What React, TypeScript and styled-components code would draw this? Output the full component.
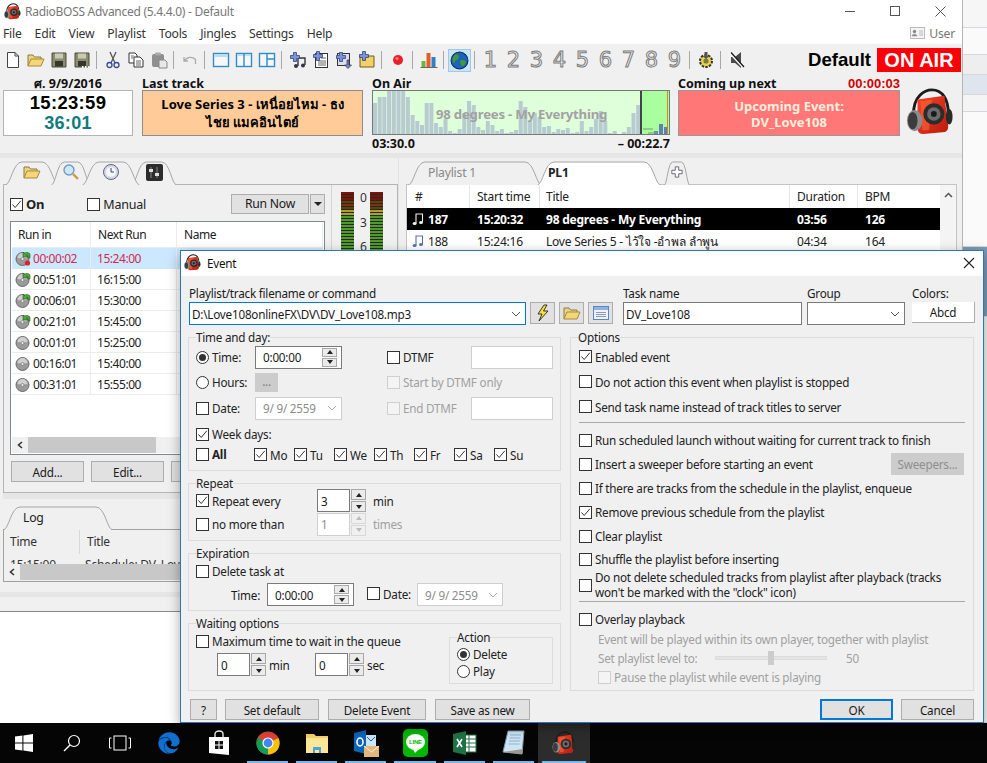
import React from 'react';
import styled, { createGlobalStyle } from 'styled-components';
import { FaEdge } from 'react-icons/fa';

const GlobalStyle = createGlobalStyle`
  html, body { margin: 0; padding: 0; background: #fff; overflow: hidden; }
  * { box-sizing: border-box; }
  body { font-family: "Noto Sans", "Open Sans", "DejaVu Sans", sans-serif; font-size: 11.7px; letter-spacing: -0.22px; color: #1a1a1a; }
  svg { display: block; flex: none; }
`;

const Page = styled.div`
  position: relative;
  width: 987px;
  height: 763px;
  overflow: hidden;
  display: flex;
  flex-direction: column;
`;

const Desktop = styled.div`
  height: 723px;
  display: flex;
  align-items: flex-start;
  background: #fff;
`;

const MainWindow = styled.div`
  width: 963px;
  height: 612px;
  background: #f0f0f0;
  display: flex;
  flex-direction: column;
  border-bottom: 1px solid #8a8a8a;
  border-right: 1px solid #b5b5b5;
`;

const BackWindow = styled.div`
  flex: 1;
  height: 723px;
  display: flex;
  flex-direction: column;
  background: #fafafa;
`;

const BackBand = styled.div<{ $h: number; $c: string }>`
  height: ${(p) => p.$h}px;
  background: ${(p) => p.$c};
  border-bottom: 1px solid #d4d8dc;
`;

const TitleBar = styled.div`
  height: 22px;
  background: #fff;
  display: flex;
  align-items: center;
  padding-left: 4px;
  gap: 4px;
  color: #777;
  font-size: 12px;
  letter-spacing: -0.28px;
`;

const WinControls = styled.div`
  margin-left: auto;
  display: flex;
  align-items: center;
  gap: 35px;
  padding-right: 16px;
`;

const MenuBar = styled.div`
  height: 22px;
  background: #fff;
  display: flex;
  align-items: center;
  padding-left: 3px;
  gap: 13px;
  font-size: 12.2px;
  color: #333;
`;

const UserBox = styled.div`
  margin-left: auto;
  display: flex;
  align-items: center;
  gap: 4px;
  padding-right: 7px;
  color: #777;
`;

const Toolbar = styled.div`
  height: 32px;
  display: flex;
  align-items: center;
  padding-left: 1px;
`;

const ToolBtn = styled.div<{ $on?: boolean }>`
  width: 23px;
  height: 23px;
  display: flex;
  align-items: center;
  justify-content: center;
  background: ${(p) => (p.$on ? '#cce4f7' : 'transparent')};
  border: 1px solid ${(p) => (p.$on ? '#99c9ef' : 'transparent')};
`;

const ToolSep = styled.div`
  width: 1px;
  height: 18px;
  background: #a8a8a8;
  margin: 0 4px 0 3px;
`;

const Digit = styled.div`
  width: 23px;
  text-align: center;
  font-family: "DejaVu Sans", sans-serif;
  font-size: 21px;
  line-height: 23px;
  letter-spacing: 0;
  color: #f0f0f0;
  -webkit-text-stroke: 1px #7c7c7c;
`;

const ProfileName = styled.div`
  margin-left: auto;
  font-family: "Liberation Sans", sans-serif;
  font-weight: 700;
  font-size: 18.6px;
  letter-spacing: 0;
  color: #000;
  margin-right: 6px;
`;

const OnAir = styled.div`
  width: 84px;
  height: 24px;
  margin-right: 1px;
  background: #fb0007;
  color: #fff;
  font-family: "Liberation Sans", sans-serif;
  font-weight: 700;
  font-size: 20px;
  letter-spacing: 0;
  line-height: 24px;
  text-align: center;
`;

const InfoStrip = styled.div`
  height: 77px;
  display: flex;
  padding-left: 3px;
`;

const InfoCol = styled.div<{ $w: number; $mr: number }>`
  width: ${(p) => p.$w}px;
  margin-right: ${(p) => p.$mr}px;
  display: flex;
  flex-direction: column;
`;

const InfoHead = styled.div<{ $center?: boolean }>`
  height: 14px;
  line-height: 15px;
  font-weight: 700;
  font-size: 12.5px;
  letter-spacing: 0;
  color: #111;
  display: flex;
  justify-content: ${(p) => (p.$center ? 'center' : 'space-between')};
`;

const RedTime = styled.span`
  color: #d00000;
  font-family: "Liberation Sans", sans-serif;
  font-size: 13px;
`;

const ClockBox = styled.div`
  height: 46px;
  background: #fff;
  border: 1px solid #b4b4b4;
  display: flex;
  flex-direction: column;
  align-items: center;
  justify-content: center;
  font-family: "Liberation Sans", sans-serif;
  font-weight: 700;
  letter-spacing: 0;
`;

const ClockMain = styled.div`
  font-size: 18.5px;
  line-height: 20px;
  color: #000;
  letter-spacing: 0.3px;
`;

const ClockSub = styled.div`
  font-size: 18px;
  line-height: 20px;
  color: #0f7c7c;
  letter-spacing: 0.3px;
`;

const LastTrack = styled.div`
  height: 46px;
  background: #ffcc99;
  border: 1px solid #8c8c8c;
  text-align: center;
  font-weight: 700;
  font-size: 13px;
  letter-spacing: 0;
  line-height: 18px;
  padding: 4px 14px 0;
  color: #000;
`;

const SpectrumBox = styled.div`
  position: relative;
  height: 46px;
  border: 1px solid #777;
  overflow: hidden;
`;

const SpectrumTitle = styled.div`
  position: absolute;
  left: 63px;
  top: 14px;
  font-weight: 700;
  font-size: 13.2px;
  line-height: 18px;
  color: #a2a2a2;
  white-space: nowrap;
`;

const TimeRow = styled.div`
  display: flex;
  justify-content: space-between;
  font-weight: 700;
  font-size: 12.5px;
  letter-spacing: 0;
  line-height: 18px;
  color: #111;
`;

const UpcomingBox = styled.div`
  height: 46px;
  background: #ff7777;
  border: 1px solid #999;
  color: #ffeedd;
  font-weight: 700;
  font-size: 13px;
  letter-spacing: 0;
  line-height: 16px;
  text-align: center;
  padding-top: 7px;
`;

const LogoCell = styled.div`
  padding: 12px 0 0 6px;
`;

const Band = styled.div<{ $h: number }>`
  height: ${(p) => p.$h}px;
  flex: none;
  background: #e6e6e6;
`;

const Content = styled.div`
  height: 434px;
  display: flex;
`;

const LeftSide = styled.div`
  width: 398px;
  display: flex;
  flex-direction: column;
  padding-left: 3px;
`;

const RightSide = styled.div`
  flex: 1;
  display: flex;
  flex-direction: column;
  padding: 0 5px 0 7px;
  border-left: 1px solid #e2e2e2;
`;

const TabRow = styled.div<{ $h: number }>`
  height: ${(p) => p.$h}px;
  display: flex;
  align-items: flex-end;
  padding-left: 2px;
  position: relative;
  z-index: 2;
  margin-bottom: -1px;
`;

const TabShell = styled.div<{ $w: number; $active?: boolean; $ml?: number; $muted?: boolean; $bold?: boolean; $pl?: number }>`
  position: relative;
  width: ${(p) => p.$w}px;
  height: 24px;
  margin-left: ${(p) => p.$ml ?? 0}px;
  z-index: ${(p) => (p.$active ? 3 : 1)};
  display: flex;
  align-items: center;
  justify-content: ${(p) => (p.$pl ? 'flex-start' : 'center')};
  padding-bottom: 2px;
  padding-left: ${(p) => p.$pl ?? 0}px;
  font-size: 12.2px;
  font-weight: ${(p) => (p.$bold ? 700 : 400)};
  color: ${(p) => (p.$muted ? '#888' : '#222')};
`;

const TabArt = styled.svg`
  position: absolute;
  left: 0;
  top: 0;
`;

const TabLabel = styled.span`
  position: relative;
  display: flex;
`;

const Tab = ({ w, active, ml, pl, fill, muted, bold, children }: { w: number; active?: boolean; ml?: number; pl?: number; fill?: string; muted?: boolean; bold?: boolean; children: React.ReactNode }) => {
  const c = Math.min(17, w / 3);
  return (
    <TabShell $w={w} $active={active} $ml={ml} $pl={pl} $muted={muted} $bold={bold}>
      <TabArt width={w} height={24} viewBox={`0 0 ${w} 24`}>
        <path
          d={`M0.5 24 C${c * 0.35} 23 ${c * 0.47} 1 ${c} 1 H${w - c} C${w - c * 0.47} 1 ${w - c * 0.35} 23 ${w - 0.5} 24`}
          fill={fill ?? '#f0f0f0'}
          stroke="#a6a6a6"
        />
      </TabArt>
      <TabLabel>{children}</TabLabel>
    </TabShell>
  );
};

const SchedFrame = styled.div`
  height: 309px;
  border: 1px solid #b4b4b4;
  display: flex;
`;

const SchedMain = styled.div`
  width: 328px;
  border-right: 1px solid #d4d4d4;
  padding: 8px 6px 0 6px;
  display: flex;
  flex-direction: column;
`;

const VuPanel = styled.div`
  flex: 1;
  display: flex;
  padding: 7px 0 0 9px;
  gap: 16px;
  position: relative;
`;

const VuScale = styled.div`
  position: absolute;
  left: 28px;
  top: 1px;
  display: flex;
  flex-direction: column;
  font-size: 12px;
  line-height: 24.5px;
  color: #333;
`;

const SchedControls = styled.div`
  height: 22px;
  display: flex;
  align-items: center;
`;

const CheckSpacer = styled.div`
  width: 43px;
`;

const RunNow = styled.div`
  margin-left: auto;
  width: 78px;
  height: 20px;
  background: #e1e1e1;
  border: 1px solid #adadad;
  text-align: center;
  line-height: 18px;
  font-size: 12.2px;
`;

const RunDrop = styled.div`
  width: 15px;
  height: 20px;
  margin-left: 1px;
  background: #e1e1e1;
  border: 1px solid #adadad;
  display: flex;
  align-items: center;
  justify-content: center;
`;

const TriDown = styled.div`
  border-left: 4px solid transparent;
  border-right: 4px solid transparent;
  border-top: 4px solid #222;
`;

const SchedList = styled.div`
  margin-top: 6px;
  height: 234px;
  background: #fff;
  border: 1px solid #828790;
  padding: 0 1px;
  display: flex;
  flex-direction: column;
  overflow: hidden;
`;

const SchedRow = styled.div<{ $head?: boolean; $sel?: boolean; $red?: boolean }>`
  height: ${(p) => (p.$head ? 26 : 21)}px;
  flex: none;
  display: grid;
  grid-template-columns: 79px 86px 1fr;
  align-items: center;
  background: ${(p) => (p.$sel ? '#cce8ff' : '#fff')};
  color: ${(p) => (p.$red ? '#d32a4c' : '#222')};
  border-bottom: 1px solid ${(p) => (p.$sel ? '#cce8ff' : '#ececec')};
  font-size: 12px;
  letter-spacing: -0.45px;
`;

const SchedCell = styled.div<{ $pl: number }>`
  display: flex;
  align-items: center;
  gap: 2px;
  height: 100%;
  padding-left: ${(p) => p.$pl}px;
  border-right: 1px solid #ececec;
`;

const ListFill = styled.div`
  flex: 1;
`;

const HScroll = styled.div`
  height: 16px;
  flex: none;
  margin-bottom: 1px;
  background: #f0f0f0;
  display: flex;
  align-items: stretch;
`;

const ScrollArrow = styled.div`
  width: 16px;
  display: flex;
  align-items: center;
  justify-content: center;
`;

const ScrollThumb = styled.div<{ $w: number }>`
  width: ${(p) => p.$w}px;
  background: #c8c8c8;
`;

const ButtonRow = styled.div`
  margin-top: 6px;
  display: flex;
  gap: 7px;
  padding-left: 1px;
`;

const PlainBtn = styled.div<{ $w: number; $h?: number; $ml?: number; $primary?: boolean; $off?: boolean }>`
  width: ${(p) => p.$w}px;
  height: ${(p) => p.$h ?? 21}px;
  margin-left: ${(p) => p.$ml ?? 0}px;
  flex: none;
  background: ${(p) => (p.$off ? '#cccccc' : '#e1e1e1')};
  border: ${(p) => (p.$primary ? '2px solid #0078d7' : p.$off ? '1px solid #cccccc' : '1px solid #adadad')};
  color: ${(p) => (p.$off ? '#8f8f8f' : '#1a1a1a')};
  display: flex;
  align-items: center;
  justify-content: center;
`;

const LogTabs = styled.div`
  height: 31px;
  display: flex;
  align-items: flex-end;
  position: relative;
  z-index: 2;
  margin-bottom: -1px;
`;

const LogFrame = styled.div`
  height: 53px;
  border: 1px solid #a0a0a0;
  overflow: hidden;
  display: flex;
  flex-direction: column;
`;

const LogGrid = styled.div<{ $h: number }>`
  height: ${(p) => p.$h}px;
  flex: none;
  display: grid;
  grid-template-columns: 75px 1fr;
  line-height: ${(p) => (p.$h > 20 ? 24 : 22)}px;
  overflow: hidden;
  font-size: 12px;
  color: #333;
`;

const LogCell = styled.div<{ $sep?: boolean }>`
  padding-left: ${(p) => (p.$sep ? 7 : 6)}px;
  white-space: nowrap;
  border-left: ${(p) => (p.$sep ? '1px solid #d8d8d8' : 'none')};
`;

const PlaylistFrame = styled.div`
  height: 300px;
  border: 1px solid #c4c4c4;
  background: #fff;
  display: flex;
`;

const PlaylistTable = styled.div`
  width: 533px;
`;

const PlaylistRow = styled.div<{ $kind: 'head' | 'now' | 'next' }>`
  height: ${(p) => (p.$kind === 'head' ? 23 : 22)}px;
  display: grid;
  grid-template-columns: 63px 70px 250px 68px 82px;
  align-items: center;
  background: ${(p) => (p.$kind === 'now' ? '#000' : '#fff')};
  color: ${(p) => (p.$kind === 'now' ? '#fff' : '#222')};
  font-weight: ${(p) => (p.$kind === 'now' ? 700 : 400)};
  font-size: 12px;
`;

const PlaylistCell = styled.div<{ $pl: number; $sep?: boolean }>`
  height: 100%;
  padding-left: ${(p) => p.$pl}px;
  display: flex;
  align-items: center;
  gap: 4px;
  white-space: nowrap;
  overflow: hidden;
  border-right: ${(p) => (p.$sep ? '1px solid #e6e6e6' : 'none')};
`;

const VScroll = styled.div`
  flex: 1;
  background: #f4f4f4;
  display: flex;
  justify-content: center;
  padding-top: 7px;
`;

const Dialog = styled.div`
  position: absolute;
  left: 180px;
  top: 250px;
  width: 804px;
  height: 473px;
  background: #f0f0f0;
  border: 1px solid #2b78b8;
  box-shadow: 0 4px 12px rgba(0, 0, 0, 0.35);
  z-index: 10;
  display: flex;
  flex-direction: column;
`;

const DlgTitle = styled.div`
  height: 25px;
  flex: none;
  background: #fff;
  display: flex;
  align-items: center;
  padding: 0 8px 2px 3px;
  gap: 6px;
  color: #111;
`;

const DlgClose = styled.div`
  margin-left: auto;
`;

const DlgBody = styled.div`
  flex: 1;
  display: flex;
  flex-direction: column;
  padding: 10px 0 0 7px;
`;

const TopRow = styled.div`
  height: 44px;
  flex: none;
  display: flex;
  padding-left: 1px;
`;

const Field = styled.div<{ $w: number; $mr?: number }>`
  width: ${(p) => p.$w}px;
  margin-right: ${(p) => p.$mr ?? 0}px;
  flex: none;
`;

const FieldLabel = styled.div`
  height: 16px;
  line-height: 15px;
`;

const IconBtn = styled.div<{ $mr: number }>`
  width: 25px;
  height: 22px;
  margin: 16px ${(p) => p.$mr}px 0 0;
  flex: none;
  background: #e1e1e1;
  border: 1px solid #adadad;
  display: flex;
  align-items: center;
  justify-content: center;
`;

const TextBox = styled.div<{ $w?: number; $h?: number; $focus?: boolean; $off?: boolean; $pl?: number }>`
  width: ${(p) => (p.$w ? `${p.$w}px` : '100%')};
  height: ${(p) => p.$h ?? 23}px;
  flex: none;
  background: #fff;
  border: 1px solid ${(p) => (p.$focus ? '#0078d7' : p.$off ? '#cfcfcf' : '#7a7a7a')};
  color: ${(p) => (p.$off ? '#8d8d8d' : '#1a1a1a')};
  display: flex;
  align-items: center;
  justify-content: space-between;
  padding: 0 4px 0 ${(p) => p.$pl ?? 2}px;
  white-space: nowrap;
`;

const ColorBtn = styled.div`
  height: 21px;
  background: #fff;
  border-right: 1px solid #adadad;
  border-bottom: 1px solid #adadad;
  text-align: center;
  line-height: 20px;
`;

const Columns = styled.div`
  display: flex;
  gap: 9px;
`;

const LeftCol = styled.div`
  width: 373px;
  display: flex;
  flex-direction: column;
  gap: 5px;
`;

const Group = styled.fieldset<{ $h: number; $w?: number }>`
  margin: 0;
  padding: 0 7px 0 7px;
  height: ${(p) => p.$h}px;
  width: ${(p) => (p.$w ? `${p.$w}px` : 'auto')};
  flex: none;
  border: 1px solid #dcdcdc;
  min-width: 0;
`;

const GroupTitle = styled.legend`
  padding: 0;
  margin-left: 0;
  height: 14px;
  line-height: 15px;
  color: #222;
`;

const TimeGrid = styled.div`
  display: grid;
  grid-template-columns: 59px 132px 84px 82px;
  grid-template-rows: 24px 26px 26px 26px 16px;
  align-items: center;
  padding-top: 1px;
`;

const FullRow = styled.div`
  grid-column: 1 / -1;
  display: flex;
  align-items: center;
`;

const DayAll = styled.div`
  width: 58px;
`;

const DayItem = styled.div`
  width: 40px;
`;

const SmallBtn = styled.div`
  width: 23px;
  height: 19px;
  background: #cccccc;
  color: #7d7d7d;
  text-align: center;
  line-height: 17px;
`;

const RepeatGrid = styled.div`
  display: grid;
  grid-template-columns: 121px 56px 1fr;
  grid-template-rows: 23px 24px;
  align-items: center;
  margin-top: -1px;
`;

const Muted = styled.span<{ $off?: boolean }>`
  color: ${(p) => (p.$off ? '#a0a0a0' : '#222')};
`;

const CheckLine = styled.div`
  height: 22px;
  display: flex;
  align-items: center;
`;

const ExpiryRow = styled.div`
  height: 23px;
  margin-top: 1px;
  display: flex;
  align-items: center;
`;

const RowText = styled.span<{ $ml: number; $w?: number }>`
  margin-left: ${(p) => p.$ml}px;
  ${(p) => (p.$w ? `width: ${p.$w}px;` : '')}
  flex: none;
`;

const DateCheckCell = styled.div`
  width: 50px;
  margin-left: 13px;
  flex: none;
`;

const WaitLayout = styled.div`
  display: flex;
`;

const WaitLeft = styled.div`
  width: 254px;
`;

const ActionRadio = styled.div<{ $h: number }>`
  height: ${(p) => p.$h}px;
  display: flex;
  align-items: flex-end;
`;

const SpinWrap = styled.div`
  display: flex;
  flex: none;
`;

const SpinCol = styled.div<{ $ml: number }>`
  width: 15px;
  margin-left: ${(p) => p.$ml}px;
  height: 23px;
  display: flex;
  flex-direction: column;
  gap: 1px;
`;

const SpinPart = styled.div<{ $off?: boolean }>`
  flex: 1;
  background: ${(p) => (p.$off ? '#f0f0f0' : '#ebebeb')};
  border: 1px solid ${(p) => (p.$off ? '#d8d8d8' : '#a8a8a8')};
  display: flex;
  align-items: center;
  justify-content: center;
`;

const Tri = styled.div<{ $up?: boolean; $off?: boolean }>`
  border-left: 3px solid transparent;
  border-right: 3px solid transparent;
  border-${(p) => (p.$up ? 'bottom' : 'top')}: 4px solid ${(p) => (p.$off ? '#bbb' : '#222')};
`;

const InnerSpin = styled.div`
  width: 15px;
  height: 19px;
  display: flex;
  flex-direction: column;
  gap: 1px;
`;

const Spin = ({ off, inner, ml = 1 }: { off?: boolean; inner?: boolean; ml?: number }) => {
  const parts = (
    <>
      <SpinPart $off={off}><Tri $up $off={off} /></SpinPart>
      <SpinPart $off={off}><Tri $off={off} /></SpinPart>
    </>
  );
  return inner ? <InnerSpin>{parts}</InnerSpin> : <SpinCol $ml={ml}>{parts}</SpinCol>;
};

const NumBox = ({ value, off }: { value: string; off?: boolean }) => (
  <SpinWrap>
    <TextBox $w={33} $off={off} $pl={3}>{value}</TextBox>
    <Spin off={off} />
  </SpinWrap>
);

const OptionsCol = styled.div`
  width: 404px;
`;

const OptRow = styled.div<{ $h: number; $ml?: number }>`
  height: ${(p) => p.$h}px;
  padding: 0 2px 0 ${(p) => p.$ml ?? 1}px;
  display: flex;
  align-items: center;
  justify-content: space-between;
`;

const OptRule = styled.div<{ $h: number; $top: number }>`
  height: ${(p) => p.$h}px;
  padding-top: ${(p) => p.$top}px;
  &::after {
    content: '';
    display: block;
    height: 1px;
    margin: 0 1px 0 1px;
    background: #a8a8a8;
  }
`;

const OptColumnsWrap = styled.div`
  display: flex;
  flex-direction: column;
`;

const SliderLine = styled.div`
  display: flex;
  align-items: center;
  color: #a0a0a0;
`;

const SliderLabel = styled.span`
  width: 117px;
`;

const SliderTrack = styled.div`
  position: relative;
  width: 112px;
  height: 4px;
  margin-right: 19px;
  background: #e4e4e4;
  border: 1px solid #dcdcdc;
`;

const SliderThumb = styled.div`
  position: absolute;
  left: 52px;
  top: -6px;
  width: 6px;
  height: 14px;
  background: #cccccc;
`;

const DlgButtons = styled.div`
  height: 21px;
  margin-top: 8px;
  display: flex;
  align-items: center;
  padding: 0 9px 0 2px;
`;

const PushRight = styled.div`
  flex: 1;
`;

const Taskbar = styled.div`
  height: 40px;
  flex: none;
  background: #050506;
  display: flex;
  padding-left: 0;
  position: relative;
`;

const TaskItem = styled.div<{ $w: number; $run?: boolean; $active?: boolean }>`
  position: relative;
  width: ${(p) => p.$w}px;
  height: 40px;
  flex: none;
  display: flex;
  align-items: center;
  justify-content: center;
  background: ${(p) => (p.$active ? '#2c2c2c' : 'transparent')};
  ${(p) =>
    p.$run
      ? `&::after {
    content: '';
    position: absolute;
    left: 4px;
    right: 4px;
    bottom: 0;
    height: 2px;
    background: #76b9ed;
  }`
      : ''}
`;

const CheckBoxMark = styled.span<{ $off?: boolean }>`
  width: 13px;
  height: 13px;
  flex: none;
  display: inline-flex;
  align-items: center;
  justify-content: center;
  background: ${(p) => (p.$off ? '#f4f4f4' : '#fff')};
  border: 1px solid ${(p) => (p.$off ? '#cfcfcf' : '#333')};
`;

const CheckWrap = styled.span<{ $off?: boolean; $bold?: boolean; $size?: number }>`
  display: inline-flex;
  align-items: center;
  gap: 3px;
  color: ${(p) => (p.$off ? '#a0a0a0' : '#222')};
  font-weight: ${(p) => (p.$bold ? 700 : 400)};
  font-size: ${(p) => p.$size ?? 11.7}px;
  white-space: nowrap;
`;

const RadioMark = styled.span`
  width: 13px;
  height: 13px;
  flex: none;
  border-radius: 50%;
  background: #fff;
  border: 1px solid #333;
  display: inline-flex;
  align-items: center;
  justify-content: center;
`;

const RadioDot = styled.span`
  width: 7px;
  height: 7px;
  border-radius: 50%;
  background: #333;
`;

const TwoLine = styled.span`
  line-height: 15px;
`;

const Check = ({ on, off, bold, size, children }: { on?: boolean; off?: boolean; bold?: boolean; size?: number; children?: React.ReactNode }) => (
  <CheckWrap $off={off} $bold={bold} $size={size}>
    <CheckBoxMark $off={off}>
      {on && (
        <svg width="11" height="11" viewBox="0 0 11 11">
          <path d="M1.5 5.5 L4.2 8.5 L9.8 1.8" fill="none" stroke="#333" strokeWidth="1" />
        </svg>
      )}
    </CheckBoxMark>
    {children}
  </CheckWrap>
);

const Radio = ({ on, children }: { on?: boolean; children: React.ReactNode }) => (
  <CheckWrap>
    <RadioMark>{on && <RadioDot />}</RadioMark>
    {children}
  </CheckWrap>
);

const Chevron = ({ off }: { off?: boolean }) => (
  <svg width="10" height="6" viewBox="0 0 10 6">
    <path d="M1 1 L5 5 L9 1" fill="none" stroke={off ? '#aaa' : '#555'} strokeWidth="1" />
  </svg>
);

// logo: red speaker with headphones
const Logo = ({ size }: { size: number }) => (
  <svg width={size} height={size} viewBox="0 0 50 50">
    <defs>
      <linearGradient id="logoRed" x1="0" y1="0" x2="1" y2="1">
        <stop offset="0" stopColor="#f6402a" />
        <stop offset="1" stopColor="#b81c0c" />
      </linearGradient>
    </defs>
    <path d="M8 28 C7 8 20 2 27 2 C38 2 44 12 44 26" fill="none" stroke="#1c1c1c" strokeWidth="3" />
    <path d="M12 12 L40 8 L44 40 Q44 46 38 46 L18 48 Q12 48 12 42 Z" fill="url(#logoRed)" />
    <path d="M15 14 L27 12 L24 44 L17 44 Z" fill="#ff6a3c" opacity="0.55" />
    <circle cx="29" cy="27" r="11" fill="#2c2c2c" />
    <circle cx="29" cy="27" r="7" fill="#6b6b6b" />
    <circle cx="29" cy="27" r="3" fill="#1a1a1a" />
    <ellipse cx="9" cy="34" rx="8" ry="11" fill="#8c8c8c" />
    <ellipse cx="7" cy="34" rx="5" ry="9" fill="#3c3c3c" />
    <ellipse cx="45" cy="30" rx="3.5" ry="8" fill="#2a2a2a" />
  </svg>
);

const Ico = ({ children, s = 18, vb = 18 }: { children: React.ReactNode; s?: number; vb?: number }) => (
  <svg width={s} height={s} viewBox={`0 0 ${vb} ${vb}`}>{children}</svg>
);

const FolderIcon = () => (
  <Ico>
    <path d="M1 15 V4 H6 L7.5 6 H14 V8" fill="#e8d48a" stroke="#8d7a3c" />
    <path d="M1 15 L4 8 H17 L14 15 Z" fill="#f6d677" stroke="#a68a3a" />
  </Ico>
);

const PlusMark = ({ x, y }: { x: number; y: number }) => (
  <path d={`M${x - 1.5} ${y - 4.5} h3 v3 h3 v3 h-3 v3 h-3 v-3 h-3 v-3 h3 Z`} fill="#7d93d6" stroke="#33447f" strokeWidth="0.8" />
);

const ToolIcons: Record<string, React.ReactNode> = {
  doc: (
    <Ico>
      <path d="M3.5 1.5 H11 L14.5 5 V16.5 H3.5 Z" fill="#fff" stroke="#444" />
      <path d="M11 1.5 V5 H14.5" fill="none" stroke="#444" />
    </Ico>
  ),
  open: <FolderIcon />,
  save: (
    <Ico>
      <path d="M2 2 H16 V16 H2 Z" fill="#8b8d72" stroke="#4a4a3a" />
      <rect x="5" y="2.5" width="8" height="5" fill="#c9cbb5" />
      <rect x="5" y="10" width="8" height="5.5" fill="#35372c" />
    </Ico>
  ),
  saveAll: (
    <Ico>
      <path d="M2 2 H16 V16 H2 Z" fill="#8b8d72" stroke="#4a4a3a" />
      <rect x="5" y="2.5" width="8" height="5" fill="#c9cbb5" />
      <rect x="5" y="10" width="8" height="5.5" fill="#35372c" />
      <path d="M9 16 h1.5 M12 16 h1.5 M15 16 h1.5" stroke="#fff" strokeWidth="2" />
    </Ico>
  ),
  cut: (
    <Ico>
      <path d="M6 1 L11 12 M12 1 L7 12" stroke="#555" strokeWidth="1.3" />
      <circle cx="5.5" cy="14" r="2.5" fill="none" stroke="#39469c" strokeWidth="1.3" />
      <circle cx="12.5" cy="14" r="2.5" fill="none" stroke="#39469c" strokeWidth="1.3" />
    </Ico>
  ),
  copy: (
    <Ico>
      <path d="M2 2 H8 L10 4 V12 H2 Z" fill="#fff" stroke="#333" />
      <path d="M7 6 H13 L16 9 V16 H7 Z" fill="#fff" stroke="#333" />
      <path d="M4 5 H7 M4 7 H6 M9 10 H14 M9 12 H14 M9 14 H14" stroke="#666" />
    </Ico>
  ),
  paste: (
    <Ico>
      <rect x="2" y="3" width="12" height="13" rx="2" fill="#8f8f8f" />
      <rect x="5" y="1.5" width="6" height="3" rx="1" fill="#aaa" />
      <path d="M9 9 H15 L17 11 V17 H9 Z" fill="#e8e8e8" stroke="#888" />
    </Ico>
  ),
  undo: (
    <Ico>
      <path d="M3 6 L3 10 L7 10 M3.5 9.5 C6 6 11 5 14.5 8.5 V13" fill="none" stroke="#aaa" strokeWidth="1.3" />
    </Ico>
  ),
  layout1: (
    <Ico>
      <rect x="1.5" y="2.5" width="15" height="13" fill="#f4f8fb" stroke="#2f8cc6" strokeWidth="1.4" />
      <rect x="2" y="3" width="14" height="3" fill="#bcdcf0" />
    </Ico>
  ),
  layout2: (
    <Ico>
      <rect x="1.5" y="2.5" width="15" height="13" fill="#f4f8fb" stroke="#2f8cc6" strokeWidth="1.4" />
      <rect x="2" y="3" width="14" height="2" fill="#bcdcf0" />
      <path d="M9 3 V15" stroke="#2f8cc6" strokeWidth="1.4" />
    </Ico>
  ),
  layout3: (
    <Ico>
      <rect x="1.5" y="2.5" width="15" height="13" fill="#f4f8fb" stroke="#2f8cc6" strokeWidth="1.4" />
      <path d="M9 3 V15 M9 8 H16" stroke="#2f8cc6" strokeWidth="1.4" />
    </Ico>
  ),
  addTrack: (
    <Ico>
      <path d="M9 7 H16 V14 M9 8 V15" fill="none" stroke="#334" strokeWidth="1.4" />
      <circle cx="7" cy="15" r="2" fill="#334" />
      <circle cx="14" cy="14.5" r="2" fill="#334" />
      <PlusMark x={6} y={6} />
    </Ico>
  ),
  addList: (
    <Ico>
      <rect x="3.5" y="2.5" width="12" height="14" fill="#fff" stroke="#333" />
      <path d="M9 7 H14 M6 10 H14 M6 12 H14 M6 14 H14" stroke="#666" />
      <PlusMark x={6} y={5} />
    </Ico>
  ),
  addDown: (
    <Ico>
      <rect x="2.5" y="2.5" width="12" height="12" fill="#dde" stroke="#333" />
      <path d="M12 9 V14 H9.5 L13 17.5 L16.5 14 H14 V9 Z" fill="#6d87cc" stroke="#334" strokeWidth="0.7" />
      <PlusMark x={6} y={6} />
    </Ico>
  ),
  addFolder: (
    <Ico>
      <path d="M2 16 V5 H16 V16 Z" fill="#f3d164" stroke="#6d5a25" />
      <PlusMark x={6} y={5} />
    </Ico>
  ),
  record: (
    <Ico>
      <circle cx="9" cy="9" r="5" fill="#e8202a" />
      <circle cx="8" cy="7.5" r="1.6" fill="#f77" />
    </Ico>
  ),
  chart: (
    <Ico>
      <rect x="1.5" y="10" width="4" height="6.5" fill="#6cb33f" />
      <rect x="6.5" y="2" width="4" height="14.5" fill="#e0602b" />
      <rect x="11.5" y="6" width="4" height="10.5" fill="#2f7fc9" />
      <path d="M0.5 16.5 H17.5" stroke="#666" />
    </Ico>
  ),
  globe: (
    <Ico s={19}>
      <circle cx="9" cy="9" r="8" fill="#1c64b8" />
      <path d="M5 3 C8 3 9 5 8 7 C6 9 4 9 4 12 C2 10 2 5 5 3 Z M10 9 C13 8 15 9 15 11 C14 14 12 15 11 14 C10 12 9 11 10 9 Z" fill="#3f9a3a" />
      <circle cx="9" cy="9" r="8" fill="none" stroke="#0c2c55" />
    </Ico>
  ),
  gear: (
    <Ico>
      <circle cx="9" cy="10" r="6" fill="#e8d64a" stroke="#333" strokeDasharray="2.5 1.2" strokeWidth="2" />
      <circle cx="9" cy="10" r="2.6" fill="#7b7b4a" />
      <path d="M7.5 1 H10.5 V5 H12.5 L9 8 L5.5 5 H7.5 Z" fill="#555" />
    </Ico>
  ),
  mute: (
    <Ico>
      <path d="M3 6 H7 L13 1 V17 L7 12 H3 Z" fill="#4a4a4a" />
      <path d="M2 2 L15 16" stroke="#fff" strokeWidth="2.2" />
      <path d="M3 1.5 L16 16" stroke="#111" strokeWidth="1.2" />
    </Ico>
  ),
};

const toolbarLayout = [
  ['doc', 'open', 'save', 'saveAll'],
  ['cut', 'copy', 'paste'],
  ['undo'],
  ['layout1', 'layout2', 'layout3'],
  ['addTrack', 'addList', 'addDown', 'addFolder'],
  ['record'],
  ['chart'],
  ['globe'],
];

const bars = [
  32, 38, 38, 45, 45, 45, 45, 38, 20, 14, 10, 32, 32, 12, 8, 16, 4, 2, 6, 22, 34, 30, 8, 5, 14, 10, 4, 6, 2, 3,
  5, 34, 28, 14, 22, 18, 8, 9, 3, 6, 5, 7, 2, 3, 14, 4, 8, 16, 24, 14, 2, 4, 1, 3, 8, 22, 30,
];

const SpectrumArt = () => (
  <svg width="298" height="44" viewBox="0 0 298 44">
    <rect width="298" height="44" fill="#dfffdb" />
    <rect x="268" width="30" height="44" fill="#a9ff9e" />
    {bars.map((h, i) => (
      <rect key={i} x={i * 4.7} y={44 - h} width={4} height={h} fill="#b7cbd0" />
    ))}
    <path d="M270 38 h10 M275 42 h8" stroke="#6aa06a" />
    <rect x="281" y="40" width="4" height="4" fill="#6f90a8" />
    <rect x="286" y="33" width="4" height="11" fill="#5f80b0" />
    <rect x="291" y="36" width="3" height="8" fill="#5f80b0" />
    <rect x="267" width="2" height="44" fill="#444" />
    <rect x="294" width="1" height="44" fill="#e08020" />
  </svg>
);

const VuMeter = () => (
  <svg width="13" height="58" viewBox="0 0 13 58">
    <rect width="13" height="58" fill="#2a2a14" />
    {Array.from({ length: 20 }).map((_, i) => {
      const y = i * 3;
      const c = i < 3 ? '#7a1410' : i < 6 ? '#6e3a14' : i < 8 ? '#a8a030' : '#4f9a2e';
      return <rect key={i} x="0" y={y} width="13" height="2" fill={c} />;
    })}
  </svg>
);

const DiscIcon = ({ arrow, rec }: { arrow?: boolean; rec?: boolean }) => (
  <svg width="16" height="16" viewBox="0 0 16 16">
    <circle cx="7.5" cy="9" r="6.5" fill="#9a9a9a" stroke="#6a6a6a" />
    <path d="M2.5 8 A5 5 0 0 1 12.5 8 L9 8.5 A2 2 0 0 0 6 8.5 Z" fill="#cfcfcf" />
    <circle cx="7.5" cy="9" r="1.5" fill="#eee" stroke="#666" strokeWidth="0.6" />
    {arrow && <path d="M15 8 V4 C13.5 2 11 2 9.5 3.5 L8 2 V7 H13 L11.2 5.2 C12 4.6 12.8 4.8 13 6 V8 Z" fill="#4fa83c" stroke="#255c1c" strokeWidth="0.6" />}
    {rec && <circle cx="12.5" cy="13" r="2.6" fill="#e0202a" />}
  </svg>
);

const NoteIcon = ({ c }: { c: string }) => (
  <svg width="12" height="14" viewBox="0 0 12 14">
    <path d="M4 11 V2 H10.5 V10" fill="none" stroke={c} strokeWidth="1.1" />
    <ellipse cx="2.6" cy="11.5" rx="2" ry="1.6" fill={c} />
    <ellipse cx="9" cy="10.5" rx="2" ry="1.6" fill={c} />
  </svg>
);

const schedRows = [
  { run: '00:00:02', next: '15:24:00', arrow: true, rec: true, sel: true },
  { run: '00:51:01', next: '16:15:00', arrow: true },
  { run: '00:06:01', next: '15:30:00', arrow: true },
  { run: '00:21:01', next: '15:45:00', arrow: true },
  { run: '00:01:01', next: '15:25:00' },
  { run: '00:16:01', next: '15:40:00' },
  { run: '00:31:01', next: '15:55:00' },
];

const weekDays = ['Mo', 'Tu', 'We', 'Th', 'Fr', 'Sa', 'Su'];

const taskApps = (
  <>
    <TaskItem $w={48}>
      <svg width="18" height="18" viewBox="0 0 18 18">
        <path d="M0 2.6 L7.4 1.6 V8.5 H0 Z M8.4 1.4 L18 0 V8.5 H8.4 Z M0 9.5 H7.4 V16.4 L0 15.4 Z M8.4 9.5 H18 V18 L8.4 16.6 Z" fill="#fff" />
      </svg>
    </TaskItem>
    <TaskItem $w={48}>
      <svg width="18" height="18" viewBox="0 0 18 18">
        <circle cx="11" cy="7" r="5.5" fill="none" stroke="#fff" strokeWidth="1.2" />
        <path d="M7 11 L1 17" stroke="#fff" strokeWidth="1.5" />
      </svg>
    </TaskItem>
    <TaskItem $w={48}>
      <svg width="22" height="16" viewBox="0 0 22 16">
        <rect x="5" y="1" width="12" height="14" fill="none" stroke="#fff" />
        <path d="M2.5 3 H0.5 V13 H2.5 M19.5 3 H21.5 V13 H19.5" fill="none" stroke="#fff" />
      </svg>
    </TaskItem>
    <TaskItem $w={50}>
      <FaEdge size={22} color="#1170cf" />
    </TaskItem>
    <TaskItem $w={49}>
      <svg width="22" height="26" viewBox="0 0 22 26">
        <path d="M1 7 H21 V25 L1 23 Z" fill="#fff" />
        <path d="M7 7 V4 C7 0 15 0 15 4 V7" fill="none" stroke="#fff" strokeWidth="1.3" />
        <path d="M7 11 H10.5 V14.5 H7 Z M11.5 11 H15 V14.5 H11.5 Z M7 15.5 H10.5 V19 H7 Z M11.5 15.5 H15 V19 H11.5 Z" fill="#111" />
      </svg>
    </TaskItem>
    <TaskItem $w={49} $run>
      <svg width="24" height="24" viewBox="0 0 24 24">
        <circle cx="12" cy="12" r="11.5" fill="#db4437" />
        <path d="M12 12 L22.5 7 A11.5 11.5 0 0 1 12 23.5 Z" fill="#f4c20d" />
        <path d="M12 12 L12 23.5 A11.5 11.5 0 0 1 1.5 7 Z" fill="#0f9d58" />
        <circle cx="12" cy="12" r="5.6" fill="#fff" />
        <circle cx="12" cy="12" r="4.4" fill="#4285f4" />
      </svg>
    </TaskItem>
    <TaskItem $w={49} $run>
      <svg width="24" height="24" viewBox="0 0 24 24">
        <path d="M1 3 H9 L11 5 H23 V22 H1 Z" fill="#f6d365" />
        <rect x="1" y="7" width="22" height="15" fill="#fce69a" />
        <path d="M8 22 V16 H16 V22 H14 V19 H10 V22 Z" fill="#4aa3df" />
      </svg>
    </TaskItem>
    <TaskItem $w={49} $run>
      <svg width="26" height="28" viewBox="0 0 26 28">
        <path d="M1 4 L13 1 V25 L1 22 Z" fill="#0a64b8" />
        <rect x="13" y="6" width="10" height="12" fill="#cfe4f7" />
        <path d="M14 8 L18 12 L22 8" fill="none" stroke="#0a64b8" />
        <ellipse cx="7" cy="13" rx="3" ry="4" fill="none" stroke="#fff" strokeWidth="1.6" />
        <rect x="11" y="17" width="15" height="11" fill="#e3b77c" />
        <path d="M11 17 L18.5 23 L26 17" fill="none" stroke="#fff" strokeWidth="0.8" />
      </svg>
    </TaskItem>
    <TaskItem $w={50} $run>
      <svg width="25" height="28" viewBox="0 0 25 28">
        <rect width="25" height="28" rx="5" fill="#00b900" />
        <ellipse cx="12.5" cy="13" rx="9.5" ry="8" fill="#fff" />
        <path d="M10 20 L12 24 L16 20 Z" fill="#fff" />
        <text x="12.5" y="15" fontSize="6" fontWeight="700" textAnchor="middle" fill="#00b900" fontFamily="Liberation Sans">LINE</text>
      </svg>
    </TaskItem>
    <TaskItem $w={49} $run>
      <svg width="24" height="24" viewBox="0 0 24 24">
        <rect x="11" y="4" width="12" height="17" fill="#fff" stroke="#1f7244" />
        <path d="M11 8 H23 M11 12 H23 M11 16 H23 M16 4 V21" stroke="#1f7244" />
        <path d="M0 3 L13 0 V24 L0 21 Z" fill="#1f7244" />
        <path d="M4 8 L9 16 M9 8 L4 16" stroke="#fff" strokeWidth="1.6" />
      </svg>
    </TaskItem>
    <TaskItem $w={49} $run>
      <svg width="24" height="26" viewBox="0 0 24 26">
        <path d="M6 1 H22 L20 24 L1 22 Z" fill="#cde4f4" stroke="#7a99ad" />
        <path d="M8 5 H19 M7.5 8 H18.5 M7 11 H18 M6.5 14 H17.5" stroke="#8eb3cc" />
        <path d="M1 22 L20 24 L21 19 Z" fill="#9a9a8a" />
      </svg>
    </TaskItem>
    <TaskItem $w={52} $run $active>
      <Logo size={24} />
    </TaskItem>
  </>
);

export default function App() {
  return (
    <Page>
      <GlobalStyle />
      <Desktop>
        <MainWindow>
          <TitleBar>
            <Logo size={17} />
            RadioBOSS Advanced (5.4.4.0) - Default
            <WinControls>
              <svg width="10" height="10" viewBox="0 0 10 10"><path d="M0 5.5 H10" stroke="#555" /></svg>
              <svg width="10" height="10" viewBox="0 0 10 10"><rect x="0.5" y="0.5" width="9" height="9" fill="none" stroke="#555" /></svg>
              <svg width="11" height="11" viewBox="0 0 11 11"><path d="M0.5 0.5 L10.5 10.5 M10.5 0.5 L0.5 10.5" stroke="#555" /></svg>
            </WinControls>
          </TitleBar>
          <MenuBar>
            {['File', 'Edit', 'View', 'Playlist', 'Tools', 'Jingles', 'Settings', 'Help'].map((m) => (
              <span key={m}>{m}</span>
            ))}
            <UserBox>
              <svg width="15" height="12" viewBox="0 0 15 12">
                <rect x="0.5" y="0.5" width="14" height="11" fill="#f4f4f4" stroke="#bbb" />
                <circle cx="4.5" cy="4.5" r="1.7" fill="#888" />
                <path d="M2 9 C2 6.5 7 6.5 7 9 Z M9 4 H13 M9 6 H13 M9 8 H13" fill="#888" stroke="#999" strokeWidth="0.6" />
              </svg>
              User
            </UserBox>
          </MenuBar>
          <Toolbar>
            {toolbarLayout.map((group, gi) => (
              <React.Fragment key={gi}>
                {group.map((n) => (
                  <ToolBtn key={n} $on={n === 'globe'}>{ToolIcons[n]}</ToolBtn>
                ))}
                <ToolSep />
              </React.Fragment>
            ))}
            {['1', '2', '3', '4', '5', '6', '7', '8', '9'].map((d) => (
              <Digit key={d}>{d}</Digit>
            ))}
            <ToolSep />
            <ToolBtn>{ToolIcons.gear}</ToolBtn>
            <ToolSep />
            <ToolBtn>{ToolIcons.mute}</ToolBtn>
            <ProfileName>Default</ProfileName>
            <OnAir>ON AIR</OnAir>
          </Toolbar>
          <InfoStrip>
            <InfoCol $w={130} $mr={9}>
              <InfoHead $center>ศ. 9/9/2016</InfoHead>
              <ClockBox>
                <ClockMain>15:23:59</ClockMain>
                <ClockSub>36:01</ClockSub>
              </ClockBox>
            </InfoCol>
            <InfoCol $w={221} $mr={9}>
              <InfoHead>Last track</InfoHead>
              <LastTrack>Love Series 3  - เหนื่อยไหม - ธงไชย แมคอินไตย์</LastTrack>
            </InfoCol>
            <InfoCol $w={298} $mr={8}>
              <InfoHead>On Air</InfoHead>
              <SpectrumBox>
                <SpectrumArt />
                <SpectrumTitle>98 degrees - My Everything</SpectrumTitle>
              </SpectrumBox>
              <TimeRow>
                <span>03:30.0</span>
                <span>– 00:22.7</span>
              </TimeRow>
            </InfoCol>
            <InfoCol $w={222} $mr={0}>
              <InfoHead>
                Coming up next
                <RedTime>00:00:03</RedTime>
              </InfoHead>
              <UpcomingBox>
                Upcoming Event:
                <br />
                DV_Love108
              </UpcomingBox>
            </InfoCol>
            <LogoCell>
              <Logo size={48} />
            </LogoCell>
          </InfoStrip>
          <Band $h={5} />
          <Content>
            <LeftSide>
              <TabRow $h={27}>
                <Tab w={54}><FolderIcon /></Tab>
                <Tab w={40} ml={-8}>
                  <svg width="18" height="18" viewBox="0 0 18 18">
                    <circle cx="7" cy="7" r="5" fill="#cfe6f7" stroke="#6f9cc0" strokeWidth="1.4" />
                    <path d="M11 11 L16 16" stroke="#c89a45" strokeWidth="2.4" />
                  </svg>
                </Tab>
                <Tab w={58} ml={-9} active>
                  <svg width="18" height="18" viewBox="0 0 18 18">
                    <circle cx="9" cy="9" r="7.5" fill="#cfd8e6" stroke="#667" />
                    <circle cx="9" cy="9" r="5" fill="#f4f6fa" />
                    <path d="M9 5 V9 H12" fill="none" stroke="#444" />
                  </svg>
                </Tab>
                <Tab w={46} ml={-9}>
                  <svg width="17" height="17" viewBox="0 0 17 17">
                    <rect width="17" height="17" rx="2" fill="#2c2c2c" />
                    <path d="M5 3 V14 M11 3 V14" stroke="#888" />
                    <rect x="3" y="5" width="4" height="3" fill="#ddd" />
                    <rect x="9" y="9" width="4" height="3" fill="#ddd" />
                  </svg>
                </Tab>
              </TabRow>
              <SchedFrame>
                <SchedMain>
                  <SchedControls>
                    <Check on bold size={13}>On</Check>
                    <CheckSpacer />
                    <Check size={12.5}>Manual</Check>
                    <RunNow>Run Now</RunNow>
                    <RunDrop><TriDown /></RunDrop>
                  </SchedControls>
                  <SchedList>
                    <SchedRow $head>
                      <SchedCell $pl={6}>Run in</SchedCell>
                      <SchedCell $pl={7}>Next Run</SchedCell>
                      <SchedCell $pl={7}>Name</SchedCell>
                    </SchedRow>
                    {schedRows.map((r) => (
                      <SchedRow key={r.run} $sel={r.sel} $red={r.sel}>
                        <SchedCell $pl={3}>
                          <DiscIcon arrow={r.arrow} rec={r.rec} />
                          {r.run}
                        </SchedCell>
                        <SchedCell $pl={6}>{r.next}</SchedCell>
                        <SchedCell $pl={6} />
                      </SchedRow>
                    ))}
                    <ListFill />
                    <HScroll>
                      <ScrollArrow>
                        <svg width="8" height="8" viewBox="0 0 8 8"><path d="M6 1 L2.5 4 L6 7" fill="none" stroke="#333" strokeWidth="1.6" /></svg>
                      </ScrollArrow>
                      <ScrollThumb $w={128} />
                    </HScroll>
                  </SchedList>
                  <ButtonRow>
                    <PlainBtn $w={73}>Add...</PlainBtn>
                    <PlainBtn $w={73}>Edit...</PlainBtn>
                    <PlainBtn $w={73}>Delete</PlainBtn>
                  </ButtonRow>
                </SchedMain>
                <VuPanel>
                  <VuMeter />
                  <VuMeter />
                  <VuScale>
                    <span>0</span>
                    <span>3</span>
                    <span>6</span>
                  </VuScale>
                </VuPanel>
              </SchedFrame>
              <Band $h={6} />
              <LogTabs>
                <Tab w={110} pl={20}>Log</Tab>
              </LogTabs>
              <LogFrame>
                <LogGrid $h={24}>
                  <LogCell>Time</LogCell>
                  <LogCell $sep>Title</LogCell>
                </LogGrid>
                <LogGrid $h={10}>
                  <LogCell>15:15:00</LogCell>
                  <LogCell>Schedule: DV_Love108</LogCell>
                </LogGrid>
                <HScroll>
                  <ScrollArrow>
                    <svg width="8" height="8" viewBox="0 0 8 8"><path d="M6 1 L2.5 4 L6 7" fill="none" stroke="#333" strokeWidth="1.6" /></svg>
                  </ScrollArrow>
                  <ScrollThumb $w={300} />
                </HScroll>
              </LogFrame>
            </LeftSide>
            <RightSide>
              <TabRow $h={27}>
                <Tab w={134} muted pl={20}>Playlist 1</Tab>
                <Tab w={124} ml={-5} active fill="#fff" bold pl={11}>PL1</Tab>
                <Tab w={26} ml={3}>
                  <svg width="12" height="12" viewBox="0 0 14 14">
                    <path d="M5 1 H9 V5 H13 V9 H9 V13 H5 V9 H1 V5 H5 Z" fill="#fff" stroke="#556" />
                  </svg>
                </Tab>
              </TabRow>
              <PlaylistFrame>
                <PlaylistTable>
                  <PlaylistRow $kind="head">
                    <PlaylistCell $pl={8} $sep>#</PlaylistCell>
                    <PlaylistCell $pl={7} $sep>Start time</PlaylistCell>
                    <PlaylistCell $pl={6} $sep>Title</PlaylistCell>
                    <PlaylistCell $pl={7} $sep>Duration</PlaylistCell>
                    <PlaylistCell $pl={7}>BPM</PlaylistCell>
                  </PlaylistRow>
                  <PlaylistRow $kind="now">
                    <PlaylistCell $pl={5}><NoteIcon c="#eee" /> 187</PlaylistCell>
                    <PlaylistCell $pl={7}>15:20:32</PlaylistCell>
                    <PlaylistCell $pl={6}>98 degrees - My Everything</PlaylistCell>
                    <PlaylistCell $pl={7}>03:56</PlaylistCell>
                    <PlaylistCell $pl={7}>126</PlaylistCell>
                  </PlaylistRow>
                  <PlaylistRow $kind="next">
                    <PlaylistCell $pl={5}><NoteIcon c="#5a6fb0" /> 188</PlaylistCell>
                    <PlaylistCell $pl={7}>15:24:16</PlaylistCell>
                    <PlaylistCell $pl={6}>Love Series 5 - ไว้ใจ -อำพล ลำพูน</PlaylistCell>
                    <PlaylistCell $pl={7}>04:34</PlaylistCell>
                    <PlaylistCell $pl={7}>164</PlaylistCell>
                  </PlaylistRow>
                </PlaylistTable>
                <VScroll>
                  <svg width="9" height="6" viewBox="0 0 9 6"><path d="M1 5 L4.5 1.5 L8 5" fill="none" stroke="#555" strokeWidth="1.5" /></svg>
                </VScroll>
              </PlaylistFrame>
            </RightSide>
          </Content>
          <Band $h={5} />
        </MainWindow>
        <BackWindow>
          <BackBand $h={28} $c="#f6f6f6" />
          <BackBand $h={27} $c="#fafafa" />
          <BackBand $h={20} $c="#eeeeee" />
          <BackBand $h={20} $c="#dfe5ec" />
          <BackBand $h={17} $c="#f4f4f4" />
          <BackBand $h={135} $c="#fafafa" />
          <BackBand $h={70} $c="#7f99b5" />
          <BackBand $h={406} $c="#f4f4f4" />
        </BackWindow>
      </Desktop>
      <Taskbar>{taskApps}</Taskbar>
      <Dialog>
        <DlgTitle>
          <Logo size={17} />
          Event
          <DlgClose>
            <svg width="12" height="12" viewBox="0 0 12 12"><path d="M1 1 L11 11 M11 1 L1 11" stroke="#222" strokeWidth="1.1" /></svg>
          </DlgClose>
        </DlgTitle>
        <DlgBody>
          <TopRow>
            <Field $w={337} $mr={4}>
              <FieldLabel>Playlist/track filename or command</FieldLabel>
              <TextBox $h={23} $focus>
                D:\Love108onlineFX\DV\DV_Love108.mp3
                <Chevron />
              </TextBox>
            </Field>
            <IconBtn $mr={4}>
              <svg width="16" height="18" viewBox="0 0 16 18">
                <path d="M9 1 L3 10 H7 L4 17 L13 7 H8.5 L12 1 Z" fill="#f5e23c" stroke="#222" strokeWidth="0.9" />
              </svg>
            </IconBtn>
            <IconBtn $mr={4}><FolderIcon /></IconBtn>
            <IconBtn $mr={10}>
              <svg width="16" height="14" viewBox="0 0 16 14">
                <rect x="0.5" y="0.5" width="15" height="13" fill="#eef3fb" stroke="#5a86c4" />
                <rect x="1" y="1" width="14" height="3" fill="#8fb2e2" />
                <path d="M3 6.5 H13 M3 8.5 H13 M3 10.5 H13" stroke="#8a9ab4" />
              </svg>
            </IconBtn>
            <Field $w={179} $mr={5}>
              <FieldLabel>Task name</FieldLabel>
              <TextBox>DV_Love108</TextBox>
            </Field>
            <Field $w={98} $mr={7}>
              <FieldLabel>Group</FieldLabel>
              <TextBox><span /><Chevron /></TextBox>
            </Field>
            <Field $w={63}>
              <FieldLabel>Colors:</FieldLabel>
              <ColorBtn>Abcd</ColorBtn>
            </Field>
          </TopRow>
          <Columns>
            <LeftCol>
              <Group $h={141}>
                <GroupTitle>Time and day:</GroupTitle>
                <TimeGrid>
                  <Radio on>Time:</Radio>
                  <TextBox $w={87} $pl={7}>
                    0:00:00
                    <Spin inner />
                  </TextBox>
                  <Check>DTMF</Check>
                  <TextBox $w={82} $off />
                  <Radio>Hours:</Radio>
                  <SmallBtn>...</SmallBtn>
                  <Check off>Start by DTMF only</Check>
                  <span />
                  <Check>Date:</Check>
                  <TextBox $w={87} $off $pl={7}>
                    9/ 9/ 2559
                    <Chevron off />
                  </TextBox>
                  <Check off>End DTMF</Check>
                  <TextBox $w={82} $off />
                  <FullRow>
                    <Check on>Week days:</Check>
                  </FullRow>
                  <FullRow>
                    <DayAll><Check bold>All</Check></DayAll>
                    {weekDays.map((d) => (
                      <DayItem key={d}><Check on>{d}</Check></DayItem>
                    ))}
                  </FullRow>
                </TimeGrid>
              </Group>
              <Group $h={65}>
                <GroupTitle>Repeat</GroupTitle>
                <RepeatGrid>
                  <Check on>Repeat every</Check>
                  <NumBox value="3" />
                  <Muted>min</Muted>
                  <Check>no more than</Check>
                  <NumBox value="1" off />
                  <Muted $off>times</Muted>
                </RepeatGrid>
              </Group>
              <Group $h={65}>
                <GroupTitle>Expiration</GroupTitle>
                <CheckLine><Check>Delete task at</Check></CheckLine>
                <ExpiryRow>
                  <RowText $ml={35} $w={36}>Time:</RowText>
                  <TextBox $w={87} $pl={7}>
                    0:00:00
                    <Spin inner />
                  </TextBox>
                  <DateCheckCell><Check>Date:</Check></DateCheckCell>
                  <TextBox $w={86} $off $pl={7}>
                    9/ 9/ 2559
                    <Chevron off />
                  </TextBox>
                </ExpiryRow>
              </Group>
              <Group $h={75}>
                <GroupTitle>Waiting options</GroupTitle>
                <WaitLayout>
                  <WaitLeft>
                    <CheckLine><Check>Maximum time to wait in the queue</Check></CheckLine>
                    <ExpiryRow>
                      <RowText $ml={21} />
                      <NumBox value="0" />
                      <RowText $ml={3} $w={46}>min</RowText>
                      <NumBox value="0" />
                      <RowText $ml={3}>sec</RowText>
                    </ExpiryRow>
                  </WaitLeft>
                  <Group $h={54} $w={104}>
                    <GroupTitle>Action</GroupTitle>
                    <ActionRadio $h={18}><Radio on>Delete</Radio></ActionRadio>
                    <ActionRadio $h={17}><Radio>Play</Radio></ActionRadio>
                  </Group>
                </WaitLayout>
              </Group>
            </LeftCol>
            <OptionsCol>
              <Group $h={361}>
                <GroupTitle>Options</GroupTitle>
                <OptColumnsWrap>
                  <OptRow $h={25}><Check on>Enabled event</Check></OptRow>
                  <OptRow $h={25}><Check>Do not action this event when playlist is stopped</Check></OptRow>
                  <OptRow $h={25}><Check>Send task name instead of track titles to server</Check></OptRow>
                  <OptRule $h={9} $top={3} />
                  <OptRow $h={24}><Check>Run scheduled launch without waiting for current track to finish</Check></OptRow>
                  <OptRow $h={24}>
                    <Check>Insert a sweeper before starting an event</Check>
                    <PlainBtn $w={73} $h={22} $off>Sweepers...</PlainBtn>
                  </OptRow>
                  <OptRow $h={24}><Check>If there are tracks from the schedule in the playlist, enqueue</Check></OptRow>
                  <OptRow $h={24}><Check on>Remove previous schedule from the playlist</Check></OptRow>
                  <OptRow $h={24}><Check>Clear playlist</Check></OptRow>
                  <OptRow $h={22}><Check>Shuffle the playlist before inserting</Check></OptRow>
                  <OptRow $h={30}>
                    <Check>
                      <TwoLine>Do not delete scheduled tracks from playlist after playback (tracks<br />won't be marked with the "clock" icon)</TwoLine>
                    </Check>
                  </OptRow>
                  <OptRule $h={7} $top={1} />
                  <OptRow $h={24}><Check>Overlay playback</Check></OptRow>
                  <OptRow $h={16} $ml={20}><Muted $off>Event will be played within its own player, together with playlist</Muted></OptRow>
                  <OptRow $h={22} $ml={20}>
                    <SliderLine>
                      <SliderLabel>Set playlist level to:</SliderLabel>
                      <SliderTrack><SliderThumb /></SliderTrack>
                      50
                    </SliderLine>
                  </OptRow>
                  <OptRow $h={16} $ml={20}><Check off>Pause the playlist while event is playing</Check></OptRow>
                </OptColumnsWrap>
              </Group>
            </OptionsCol>
          </Columns>
          <DlgButtons>
            <PlainBtn $w={27}>?</PlainBtn>
            <PlainBtn $w={94} $ml={8}>Set default</PlainBtn>
            <PlainBtn $w={98} $ml={9}>Delete Event</PlainBtn>
            <PlainBtn $w={95} $ml={9}>Save as new</PlainBtn>
            <PushRight />
            <PlainBtn $w={73} $primary>OK</PlainBtn>
            <PlainBtn $w={73} $ml={8}>Cancel</PlainBtn>
          </DlgButtons>
        </DlgBody>
      </Dialog>
    </Page>
  );
}
